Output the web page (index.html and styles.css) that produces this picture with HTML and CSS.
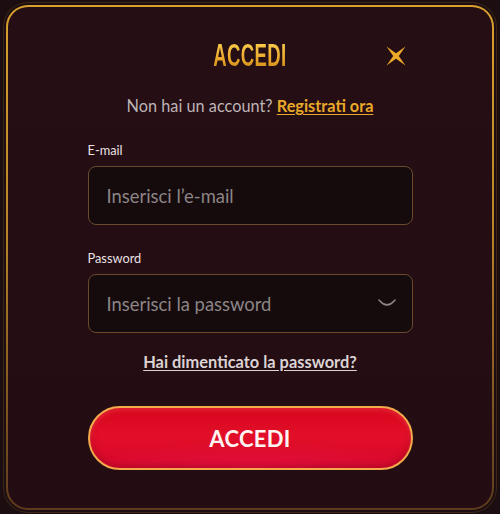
FILE: index.html
```html
<!DOCTYPE html>
<html lang="it">
<head>
<meta charset="utf-8">
<title>Accedi</title>
<link rel="stylesheet" href="styles.css">
</head>
<body>
<div class="frame">
  <div class="content">
    <div class="header">
      <span class="spacer"></span>
      <h1 class="title"><span class="title-text">ACCEDI</span></h1>
      <button class="close" aria-label="Chiudi">
        <svg width="20" height="20" viewBox="0 0 20 20"><path d="M0.5 0.5 L10 7.2 L19.5 0.5 L12.8 10 L19.5 19.5 L10 12.8 L0.5 19.5 L7.2 10 Z" fill="#eaa82a"/></svg>
      </button>
    </div>
    <p class="signup">Non hai un account? <a href="#" class="link-gold">Registrati ora</a></p>
    <div class="field">
      <label class="label">E-mail</label>
      <div class="input"><span class="placeholder">Inserisci l’e-mail</span></div>
    </div>
    <div class="field field-second">
      <label class="label">Password</label>
      <div class="input"><span class="placeholder">Inserisci la password</span>
        <svg class="chevron" width="18" height="9" viewBox="0 0 18 9"><path d="M1 1 L2.5 2.5 C6 7 12 7 15.5 2.5 L17 1" fill="none" stroke="#8e8486" stroke-width="1.6" stroke-linecap="round" stroke-linejoin="round"/></svg>
      </div>
    </div>
    <p class="forgot"><a href="#" class="link-light">Hai dimenticato la password?</a></p>
    <button class="submit">ACCEDI</button>
  </div>
</div>
</body>
</html>
```
FILE: styles.css
```css
html, body {
  margin: 0;
  padding: 0;
  background: #1b0d10;
  width: 500px;
  height: 514px;
  overflow: hidden;
}
body {
  padding-top: 5px;
  box-sizing: border-box;
  font-family: "Lato", "Noto Sans", sans-serif;
}
.frame {
  margin: 0 6px;
  height: 505px;
  box-sizing: border-box;
  border: 2px solid transparent;
  border-radius: 22px;
  background:
    linear-gradient(#250e14, #230d12) padding-box,
    linear-gradient(180deg, #d9a02e 0%, #b98428 45%, #5d3a1e 100%) border-box;
  box-shadow: 0 0 0 2px #1b0d10, 0 0 0 3px #3b2618;
}
.content {
  width: 325px;
  margin: 0 auto;
  padding-top: 29px;
}
.header {
  display: grid;
  grid-template-columns: 1fr auto 1fr;
  align-items: center;
  height: 40px;
}
.title {
  margin: 0;
  line-height: 40px;
  font-size: 31px;
  font-weight: 700;
  font-family: "Liberation Sans Narrow", "Liberation Sans", sans-serif;
}
.title-text {
  display: inline-block;
  transform: scaleX(0.6);
  background: linear-gradient(180deg, #f9c94a 20%, #e9a52a 60%, #c98a17 85%);
  -webkit-background-clip: text;
  background-clip: text;
  color: transparent;
  letter-spacing: 0.5px;
}
.close {
  justify-self: end;
  margin-right: 7px;
  width: 20px;
  height: 20px;
  padding: 0;
  border: 0;
  background: none;
  display: flex;
}
.signup {
  margin: 20px 0 0;
  text-align: center;
  font-size: 16.3px;
  line-height: 20px;
  color: #bdb4b5;
  white-space: nowrap;
}
.link-gold {
  color: #e9a928;
  font-weight: 700;
  text-decoration: underline;
  text-underline-offset: 2px;
}
.field {
  margin-top: 26px;
}
.field-second {
  margin-top: 25px;
}
.label {
  display: block;
  font-size: 12.8px;
  line-height: 16px;
  color: #e9e1e2;
  margin-bottom: 8px;
}
.input {
  height: 59px;
  box-sizing: border-box;
  border: 1px solid #6a4a2c;
  border-radius: 8px;
  background: #150b0d;
  display: flex;
  align-items: center;
  justify-content: space-between;
  padding: 0 16px 0 18px;
}
.placeholder {
  font-size: 18.4px;
  color: #8c8485;
}
.forgot {
  margin: 19px 0 0;
  text-align: center;
  font-size: 16.4px;
  line-height: 20px;
}
.link-light {
  color: #dcd3d4;
  font-weight: 700;
  text-decoration: underline;
  text-underline-offset: 2px;
}
.submit {
  display: block;
  width: 100%;
  height: 64px;
  margin-top: 34px;
  border: 2px solid #f2aa4c;
  border-radius: 32px;
  background:
    radial-gradient(ellipse 60% 40% at 50% 100%, rgba(240, 20, 80, 0.55), rgba(240, 20, 80, 0) 100%),
    linear-gradient(180deg, #d6051d 0%, #e30f29 45%, #d5072a 100%);
  box-shadow: inset 0 3px 4px rgba(255, 90, 90, 0.35), inset 0 -3px 6px rgba(120, 0, 20, 0.35);
  color: #fff4f2;
  font-family: "Lato", "Noto Sans", sans-serif;
  font-weight: 700;
  font-size: 22px;
  letter-spacing: 0.3px;
}
```
